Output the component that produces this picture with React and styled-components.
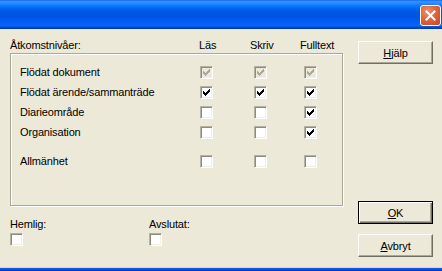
import React from "react"
import styled, { createGlobalStyle } from "styled-components"

const GlobalStyle = createGlobalStyle`
  html, body {
    margin: 0;
    padding: 0;
    background: #ece9d8;
  }
  body {
    font-family: "Liberation Sans", Arial, sans-serif;
    font-size: 11px;
    letter-spacing: -0.15px;
    color: #000;
  }
`

const Window = styled.div`
  width: 442px;
  height: 271px;
  display: flex;
  flex-direction: column;
  background: #ece9d8;
  overflow: hidden;
`

const TitleBar = styled.div`
  height: 29px;
  flex-shrink: 0;
  display: flex;
  justify-content: flex-end;
  align-items: flex-start;
  padding: 5px 1px 0 0;
  box-sizing: border-box;
  background: linear-gradient(
    to bottom,
    #0058ee 0px,
    #3a93ff 1px,
    #288eff 3px,
    #127dff 5px,
    #036ffc 7px,
    #0262ee 9px,
    #0057e5 12px,
    #0054e3 16px,
    #0055eb 19px,
    #005bf5 22px,
    #026afe 25px,
    #0062ef 26px,
    #0052d6 27px,
    #0040ab 28px,
    #0030a0 29px
  );
`

const CloseButton = styled.div`
  width: 21px;
  height: 21px;
  box-sizing: border-box;
  border: 1px solid #fff;
  border-radius: 3px;
  background: radial-gradient(circle at 35% 30%, #f0906e 0%, #e0643c 45%, #c6451d 100%);
  display: flex;
  align-items: center;
  justify-content: center;
`

const Body = styled.div`
  flex: 1;
  display: flex;
`

const Main = styled.div`
  padding: 10px 0 0 10px;
  width: 333px;
`

const HeaderRow = styled.div`
  display: grid;
  grid-template-columns: 189px 51px 50px auto;
  line-height: 13px;
  height: 13px;
`

const Group = styled.div`
  margin-top: 1px;
  height: 153px;
  box-sizing: border-box;
  border: 1px solid #aca899;
  box-shadow: inset 1px 1px 0 #fff, 1px 1px 0 #fff;
  padding-top: 9px;
`

const Row = styled.div`
  display: grid;
  grid-template-columns: 189px 54px 50px 13px;
  align-items: start;
  height: 20px;
  margin-top: ${(p) => p.$gap || 0}px;
`

const Label = styled.span`
  padding-left: 9px;
  margin-top: 3px;
  line-height: 13px;
  white-space: nowrap;
`

const Box = styled.span`
  display: block;
  width: 13px;
  height: 13px;
  box-sizing: border-box;
  margin-top: ${(p) => (p.$flat ? 0 : 3)}px;
  padding: 2px;
  border: 1px solid;
  border-color: #b4b1a3 #fff #fff #b4b1a3;
  box-shadow: inset 1px 1px 0 #8e8b7e, inset -1px -1px 0 #f1efe2;
  background: ${(p) => (p.$disabled ? "#ece9d8" : "#fff")};
  svg {
    display: block;
  }
`

const Bottom = styled.div`
  display: flex;
  margin-top: 12px;
`

const Field = styled.div`
  width: ${(p) => p.$w || "auto"};
  line-height: 13px;
  ${Box} {
    margin-top: 2px;
  }
`

const Side = styled.div`
  margin-left: 15px;
  width: 75px;
  padding: 12px 0 10px;
  display: flex;
  flex-direction: column;
  justify-content: space-between;
`

const Stack = styled.div`
  display: flex;
  flex-direction: column;
  gap: 10px;
`

const Button = styled.div`
  width: 75px;
  height: 23px;
  box-sizing: border-box;
  display: flex;
  align-items: center;
  justify-content: center;
  background: #ece9d8;
  border: 1px solid;
  border-color: ${(p) => (p.$default ? "#000" : "#fff #716f64 #716f64 #fff")};
  box-shadow: ${(p) =>
    p.$default
      ? "inset 1px 1px 0 #fff, inset -1px -1px 0 #716f64, inset -2px -2px 0 #aca899"
      : "inset -1px -1px 0 #aca899"};
  u {
    text-decoration: underline;
  }
`

const BottomFrame = styled.div`
  height: 4px;
  flex-shrink: 0;
  background: linear-gradient(to bottom, #c9d6f2 0px, #c9d6f2 1px, #1c5ee6 1px, #0a45d0 3px, #0831d9 4px);
`

const CHECK = "M0 2h1v3H0zM1 3h1v3H1zM2 4h1v3H2zM3 3h1v3H3zM4 2h1v3H4zM5 1h1v3H5zM6 0h1v3H6z"

function Check({ on, disabled, flat }) {
  return (
    <Box $disabled={disabled} $flat={flat}>
      {on && (
        <svg width="7" height="7" viewBox="0 0 7 7" shapeRendering="crispEdges">
          <path d={CHECK} fill={disabled ? "#aca899" : "#000"} />
        </svg>
      )}
    </Box>
  )
}

const rows = [
  { label: "Flödat dokument", vals: [true, true, true], disabled: true },
  { label: "Flödat ärende/sammanträde", vals: [true, true, true] },
  { label: "Diarieområde", vals: [false, false, true] },
  { label: "Organisation", vals: [false, false, true] },
  { label: "Allmänhet", vals: [false, false, false], gap: 9 },
]

export default function App() {
  return (
    <Window>
      <GlobalStyle />
      <TitleBar>
        <CloseButton>
          <svg width="11" height="11" viewBox="0 0 11 11">
            <path d="M1.5 1.5l8 8M9.5 1.5l-8 8" stroke="#fff" strokeWidth="2" strokeLinecap="square" />
          </svg>
        </CloseButton>
      </TitleBar>
      <Body>
        <Main>
          <HeaderRow>
            <span>Åtkomstnivåer:</span>
            <span>Läs</span>
            <span>Skriv</span>
            <span>Fulltext</span>
          </HeaderRow>
          <Group>
            {rows.map((r) => (
              <Row key={r.label} $gap={r.gap}>
                <Label>{r.label}</Label>
                {r.vals.map((v, i) => (
                  <Check key={i} on={v} disabled={r.disabled} />
                ))}
              </Row>
            ))}
          </Group>
          <Bottom>
            <Field $w="139px">
              <div>Hemlig:</div>
              <Check flat />
            </Field>
            <Field>
              <div>Avslutat:</div>
              <Check flat />
            </Field>
          </Bottom>
        </Main>
        <Side>
          <Button>
            <span>
              <u>H</u>jälp
            </span>
          </Button>
          <Stack>
            <Button $default>
              <span>
                <u>O</u>K
              </span>
            </Button>
            <Button>
              <span>
                <u>A</u>vbryt
              </span>
            </Button>
          </Stack>
        </Side>
      </Body>
      <BottomFrame />
    </Window>
  )
}
